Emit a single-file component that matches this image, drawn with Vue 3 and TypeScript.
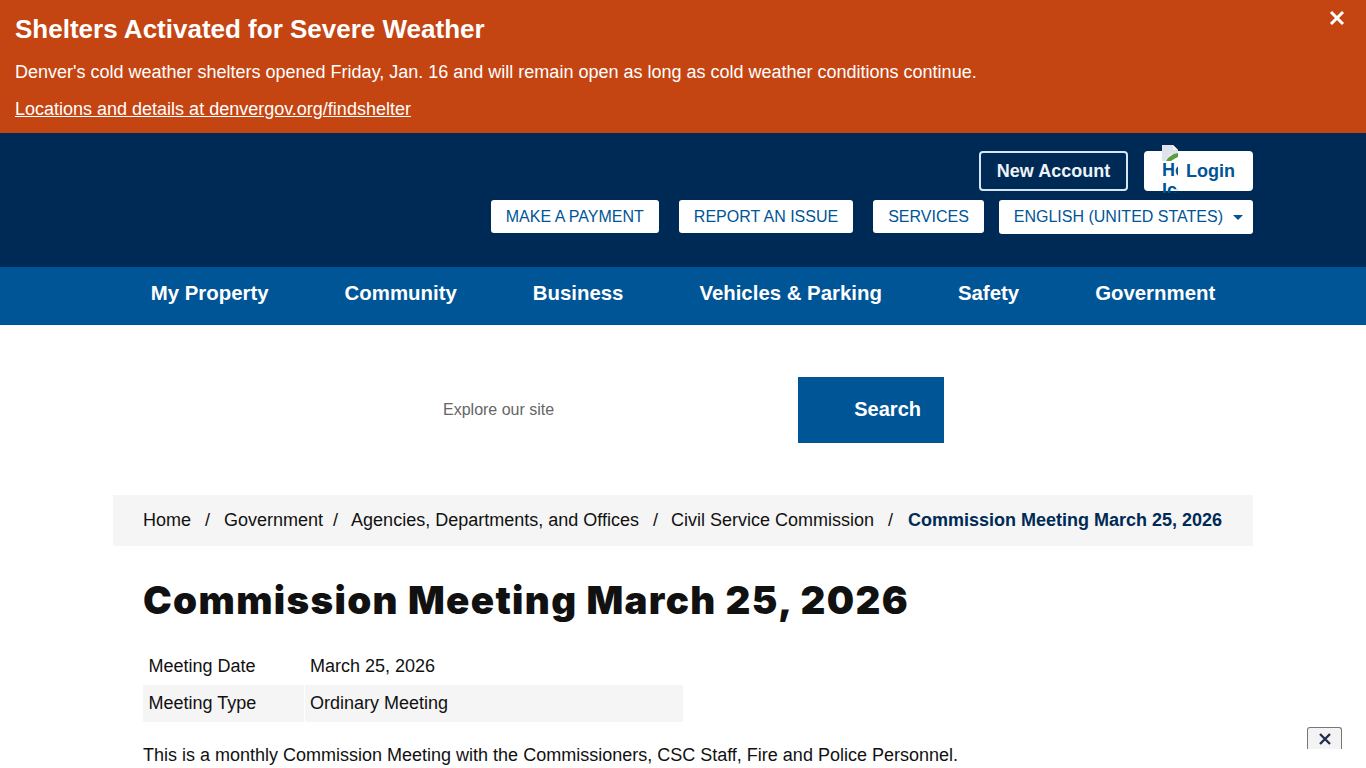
<script setup lang="ts">
const navItems = ['My Property', 'Community', 'Business', 'Vehicles & Parking', 'Safety', 'Government']
const quickLinks = ['MAKE A PAYMENT', 'REPORT AN ISSUE', 'SERVICES']
const crumbs = ['Home', 'Government', 'Agencies, Departments, and Offices', 'Civil Service Commission']
</script>

<template>
  <div class="page">
    <section class="alert">
      <h2 class="alert-title">Shelters Activated for Severe Weather</h2>
      <p class="alert-text">Denver's cold weather shelters opened Friday, Jan. 16 and will remain open as long as cold weather conditions continue.</p>
      <a class="alert-link" href="#">Locations and details at denvergov.org/findshelter</a>
      <button class="alert-close" type="button" aria-label="Close">
        <svg width="16" height="16" viewBox="0 0 16 16"><path d="M2 2l12 12M14 2L2 14" stroke="#fff" stroke-width="3" /></svg>
      </button>
    </section>

    <header class="masthead">
      <div class="account-row">
        <a class="btn-outline" href="#">New Account</a>
        <a class="btn-login" href="#">
          <span class="broken-img">
            <svg width="16" height="16" viewBox="0 0 16 16">
              <path d="M0 0h11l5 5v11H0z" fill="#fff" />
              <path d="M0 0h11v5h5v3L8 10 3 16H0z" fill="#dfe3ee" />
              <path d="M11 0l5 5h-5z" fill="#f4f5f8" />
              <path d="M4 16c2-4 6-7 12-8v4c-3 1-5 3-7 4z" fill="#5d9b3f" />
            </svg>
            <span class="broken-alt">Home Icon</span>
          </span>
          <span>Login</span>
        </a>
      </div>
      <div class="quick-row">
        <a v-for="link in quickLinks" :key="link" class="quick" href="#">{{ link }}</a>
        <a class="quick lang" href="#">ENGLISH (UNITED STATES)<i class="caret"></i></a>
      </div>
    </header>

    <nav class="main-nav">
      <a v-for="item in navItems" :key="item" href="#">{{ item }}</a>
    </nav>

    <div class="search">
      <div class="search-input">Explore our site</div>
      <button class="search-btn" type="button">Search</button>
    </div>

    <main class="content">
      <ol class="crumbs">
        <li v-for="crumb in crumbs" :key="crumb">{{ crumb }}</li>
        <li class="current">Commission Meeting March 25, 2026</li>
      </ol>

      <div class="body">
        <h1>Commission Meeting March 25, 2026</h1>
        <table class="meta">
          <tbody>
            <tr>
              <td>Meeting Date</td>
              <td>March 25, 2026</td>
            </tr>
            <tr class="alt">
              <td>Meeting Type</td>
              <td>Ordinary Meeting</td>
            </tr>
          </tbody>
        </table>
        <p class="desc">This is a monthly Commission Meeting with the Commissioners, CSC Staff, Fire and Police Personnel.</p>
      </div>
    </main>

    <button class="corner-close" type="button" aria-label="Close">
      <svg width="14" height="14" viewBox="0 0 14 14"><path d="M2 2l10 10M12 2L2 12" stroke="#1f2f4d" stroke-width="2.4" /></svg>
    </button>
  </div>
</template>

<style>
html,
body {
  margin: 0;
  height: 768px;
  overflow: hidden;
  background: #fff;
}
</style>

<style scoped>
.page {
  font-family: 'Liberation Sans', Arial, sans-serif;
  font-size: 18px;
  color: #111;
}

.alert {
  position: relative;
  box-sizing: border-box;
  height: 133px;
  background: #c44512;
  color: #fff;
  padding: 13px 15px 0;
}

.alert-title {
  margin: 0;
  font-size: 26px;
  line-height: 32px;
  font-weight: 700;
}

.alert-text {
  margin: 14px 0 0;
  line-height: 27px;
}

.alert-link {
  display: block;
  margin-top: 10px;
  line-height: 27px;
  color: #fff;
  text-decoration: underline;
}

.alert-close {
  position: absolute;
  top: 10px;
  right: 21px;
  padding: 0;
  width: 16px;
  height: 16px;
  border: 0;
  background: none;
  line-height: 0;
}

.masthead {
  box-sizing: border-box;
  height: 134px;
  background: #002a56;
  padding: 18px 113px 0;
}

.account-row {
  display: flex;
  justify-content: flex-end;
  gap: 16px;
}

.btn-outline {
  box-sizing: border-box;
  height: 40px;
  width: 149px;
  display: flex;
  align-items: center;
  justify-content: center;
  border: 2px solid #d6e6f5;
  border-radius: 4px;
  color: #eef3f8;
  font-weight: 700;
  text-decoration: none;
}

.btn-login {
  position: relative;
  box-sizing: border-box;
  width: 109px;
  height: 40px;
  display: flex;
  align-items: center;
  justify-content: flex-end;
  padding-right: 18px;
  border-radius: 4px;
  background: #fff;
  color: #005596;
  font-weight: 700;
  text-decoration: none;
}

.broken-img {
  position: absolute;
  left: 18px;
  top: -6px;
  width: 16px;
  height: 48px;
  overflow: hidden;
  font-size: 18px;
  color: #005596;
}

.broken-img svg {
  display: block;
}

.broken-alt {
  display: block;
  width: 16px;
  margin-top: -1px;
  line-height: 20px;
}

.quick-row {
  display: flex;
  justify-content: flex-end;
  margin-top: 9px;
}

.quick {
  box-sizing: border-box;
  height: 33px;
  margin-left: 20px;
  padding: 0 15px;
  display: flex;
  align-items: center;
  border-radius: 3px;
  background: #fff;
  color: #005596;
  font-size: 16px;
  text-decoration: none;
}

.lang {
  margin-left: 15px;
  padding-right: 10px;
  height: 34px;
}

.caret {
  margin-left: 10px;
  width: 0;
  height: 0;
  border: 5px solid transparent;
  border-top-color: #005596;
  border-bottom: 0;
}

.main-nav {
  box-sizing: border-box;
  height: 58px;
  padding-bottom: 6px;
  background: #005596;
  display: flex;
  justify-content: center;
  gap: 76px;
  align-items: center;
}

.main-nav a {
  color: #fff;
  font-size: 20.4px;
  font-weight: 700;
  text-decoration: none;
}

.search {
  margin-top: 52px;
  display: flex;
  justify-content: center;
  height: 66px;
}

.search-input {
  box-sizing: border-box;
  width: 376px;
  padding-left: 21px;
  display: flex;
  align-items: center;
  color: #666;
  font-size: 16px;
}

.search-btn {
  width: 146px;
  padding: 0 23px 2px 0;
  border: 0;
  background: #005596;
  color: #fff;
  font-family: inherit;
  font-size: 20px;
  font-weight: 700;
  text-align: right;
}

.content {
  margin: 52px 113px 0;
}

.crumbs {
  margin: 0;
  height: 51px;
  padding: 0 0 0 30px;
  list-style: none;
  display: flex;
  align-items: center;
  background: #f5f5f5;
}

.crumbs li {
  white-space: nowrap;
  margin-right: 14px;
}

.crumbs li:not(:last-child)::after {
  content: '/';
  margin-left: 14px;
}

.crumbs li:nth-child(2) {
  margin-right: 13px;
}

.crumbs li:nth-child(2)::after {
  margin-left: 10px;
}

.crumbs li:nth-child(3) {
  margin-right: 13px;
}

.crumbs li:nth-child(4) {
  margin-right: 15px;
}

.crumbs .current {
  color: #002a56;
  font-weight: 700;
}

.body {
  padding: 0 30px;
}

h1 {
  margin: 29px 0 0;
  font-family: Inter, 'Liberation Sans', Arial, sans-serif;
  font-size: 38.5px;
  line-height: 50px;
  font-weight: 900;
  letter-spacing: 1.33px;
  color: #111;
}

.meta {
  margin-top: 23px;
  border-collapse: separate;
  border-spacing: 0;
  width: 540px;
}

.meta td {
  height: 37px;
  padding: 0 0 0 5.5px;
}

.meta td:first-child {
  width: 155px;
}

.meta .alt td {
  background: #f5f5f5;
}

.meta .alt td:first-child {
  border-right: 1px solid #fff;
}

.desc {
  margin: 20px 0 0;
  line-height: 27px;
}

.corner-close {
  position: absolute;
  left: 1307px;
  top: 727px;
  width: 35px;
  height: 22px;
  padding: 0;
  border: 1px solid #767676;
  border-bottom: 0;
  border-radius: 3px 3px 0 0;
  background: #f3f3f3;
  line-height: 0;
}
</style>
